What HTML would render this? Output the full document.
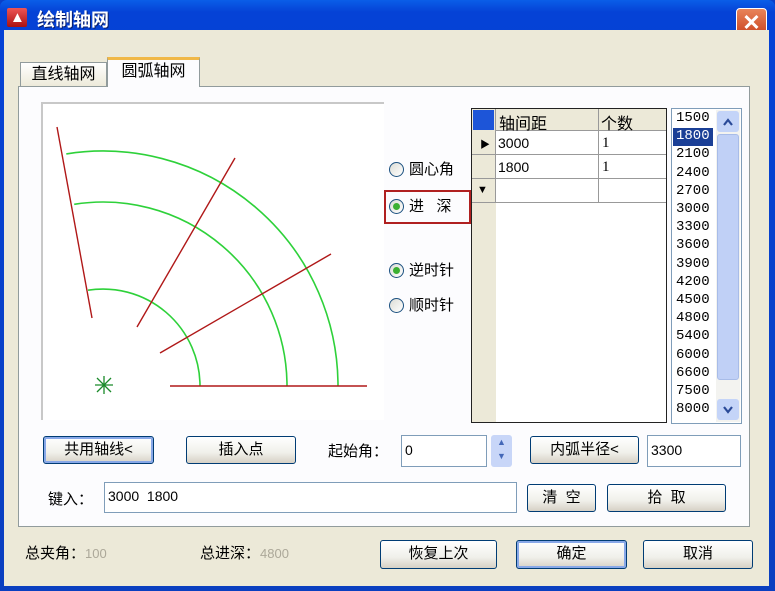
<!DOCTYPE html>
<html><head><meta charset="utf-8"><style>
*{box-sizing:border-box;margin:0;padding:0}
body{width:775px;height:591px;overflow:hidden;background:#0a3fc8;font-family:"Liberation Sans","Noto Sans CJK SC",sans-serif;font-size:14px;color:#000}
.a{position:absolute}
#win{position:absolute;left:0;top:0;width:775px;height:591px;background:linear-gradient(#0a5ee8,#0542d6 12px,#0a3fc0);border-radius:7px 7px 0 0}
#client{position:absolute;left:4px;top:30px;width:765px;height:556px;background:#ECE9D8}
.btn{position:absolute;border:1px solid #003c74;border-radius:3px;background:linear-gradient(#fff,#f0f0ea 60%,#d6d0c5);text-align:center;font-size:15px;line-height:25px}
.btn.f{box-shadow:inset 0 0 0 2px #88a8e8}
.inp{position:absolute;background:#fff;border:1px solid #7f9db9;font-size:14px;padding-left:3px}
.rad{position:absolute;width:15px;height:15px;border-radius:50%;border:1px solid #1c5180;background:linear-gradient(135deg,#dcdcd5,#fff)}
.rad.on::after{content:"";position:absolute;left:3px;top:3px;width:7px;height:7px;border-radius:50%;background:#3cb032}
.lbl{position:absolute;font-size:15px}
</style></head><body>
<div id="win">
<div class="a" style="left:7px;top:8px;width:20px;height:19px;background:linear-gradient(#e55,#a11);border-radius:2px"></div>
<div class="a" style="left:10px;top:9px;color:#fff;font-weight:bold;font-size:15px">▲</div>
<div class="a" style="left:37px;top:6px;color:#fff;font-weight:bold;font-size:18px;text-shadow:1px 1px #0a1e6a">绘制轴网</div>
<div class="a" style="left:736px;top:8px;width:31px;height:30px;border:1px solid #fff;border-radius:4px;background:linear-gradient(#e8845a,#c8401c);color:#fff;font-size:22px;text-align:center;line-height:27px;font-weight:bold">✕</div>
</div>
<div id="client"></div>
<div class="a" style="left:20px;top:62px;width:87px;height:25px;border:1px solid #919b9c;border-bottom:none;background:linear-gradient(#fff,#ece9d8);font-size:16px;text-align:center;line-height:24px">直线轴网</div>
<div class="a" style="left:18px;top:86px;width:732px;height:441px;border:1px solid #919b9c;background:#fcfcfe"></div>
<div class="a" style="left:107px;top:57px;width:93px;height:30px;border:1px solid #919b9c;border-top:3px solid #f0b848;border-bottom:none;background:#fcfcfe;font-size:16px;text-align:center;line-height:24px">圆弧轴网</div>
<div class="a" style="left:41px;top:102px;width:343px;height:318px;background:#fff;border-top:2px solid #c8c8c8;border-left:2px solid #c8c8c8"></div>
<svg class="a" style="left:0;top:0" width="775" height="591">
<g fill="none" stroke="#2ed13a" stroke-width="1.6">
<path d="M200 386 A97 97 0 0 0 88 290.2"/>
<path d="M287 386 A184 184 0 0 0 74.2 204.3"/>
<path d="M338 386 A235 235 0 0 0 66.3 153.9"/>
</g>
<g stroke="#b01818" stroke-width="1.4">
<line x1="57" y1="127" x2="92" y2="318"/>
<line x1="137" y1="327" x2="235" y2="158"/>
<line x1="160" y1="353" x2="331" y2="254"/>
<line x1="170" y1="386" x2="367" y2="386"/>
</g>
<g stroke="#1a8a2a" stroke-width="1.3">
<line x1="95" y1="385" x2="113" y2="385"/><line x1="104" y1="376" x2="104" y2="394"/>
<line x1="97" y1="378" x2="111" y2="392"/><line x1="111" y1="378" x2="97" y2="392"/>
</g>
</svg>
<div class="rad" style="left:389px;top:162px"></div><div class="lbl" style="left:409px;top:158px">圆心角</div>
<div class="a" style="left:384px;top:190px;width:87px;height:34px;border:2px solid #b02020"></div>
<div class="rad on" style="left:389px;top:199px"></div><div class="lbl" style="left:409px;top:195px">进&nbsp;&nbsp;&nbsp;深</div>
<div class="rad on" style="left:389px;top:263px"></div><div class="lbl" style="left:409px;top:259px">逆时针</div>
<div class="rad" style="left:389px;top:298px"></div><div class="lbl" style="left:409px;top:294px">顺时针</div>
<div class="a" style="left:471px;top:108px;width:196px;height:315px;border:1px solid #222;background:#fff"></div>
<div class="a" style="left:472px;top:109px;width:24px;height:313px;background:#ece9d8"></div>
<div class="a" style="left:473px;top:110px;width:21px;height:20px;background:#1d55d8"></div>
<div class="a" style="left:496px;top:109px;width:170px;height:22px;background:#ece9d8;border-bottom:1px solid #999"></div>
<div class="a" style="left:598px;top:109px;width:1px;height:94px;background:#999"></div>
<div class="a" style="left:472px;top:154px;width:194px;height:1px;background:#999"></div>
<div class="a" style="left:472px;top:178px;width:194px;height:1px;background:#999"></div>
<div class="a" style="left:472px;top:202px;width:194px;height:1px;background:#999"></div>
<div class="a" style="left:495px;top:109px;width:1px;height:94px;background:#999"></div>
<div class="a" style="left:499px;top:110px;font-size:16px">轴间距</div><div class="a" style="left:601px;top:110px;font-size:16px">个数</div>
<div class="a" style="left:480px;top:136px;font-size:10px">▶</div>
<div class="a" style="left:477px;top:184px;font-size:11px">▼</div>
<div class="a" style="left:498px;top:135px;font-size:14px">3000</div><div class="a" style="left:602px;top:135px;font-family:'Liberation Serif';font-size:15px">1</div>
<div class="a" style="left:498px;top:159px;font-size:14px">1800</div><div class="a" style="left:602px;top:159px;font-family:'Liberation Serif';font-size:15px">1</div>
<div class="a" style="left:671px;top:108px;width:71px;height:316px;border:1px solid #7f9db9;background:#fff"></div>
<div class="a" style="left:673px;top:128px;width:40px;height:18px;background:#1a3f96"></div>
<div class="a" style="left:676px;top:109px;font-family:'Liberation Mono',monospace;font-size:14px;line-height:18.2px;color:#000">1500<br><span style="color:#fff">1800</span><br>2100<br>2400<br>2700<br>3000<br>3300<br>3600<br>3900<br>4200<br>4500<br>4800<br>5400<br>6000<br>6600<br>7500<br>8000</div>
<div class="a" style="left:716px;top:110px;width:24px;height:312px;background:#f3f3f0"></div>
<div class="a" style="left:717px;top:111px;width:22px;height:21px;border-radius:3px;background:#c4d4f8"></div>
<div class="a" style="left:717px;top:134px;width:22px;height:246px;border-radius:3px;background:#c0d0f6;border:1px solid #a8bce8"></div>
<div class="a" style="left:717px;top:399px;width:22px;height:21px;border-radius:3px;background:#c4d4f8"></div>
<svg class="a" style="left:0;top:0" width="775" height="591"><g fill="none" stroke="#2a4a98" stroke-width="2.2"><path d="M724 125 L728 120 L732 125"/><path d="M724 407 L728 412 L732 407"/></g></svg>
<div class="btn f" style="left:43px;top:436px;width:111px;height:28px">共用轴线&lt;</div>
<div class="btn" style="left:186px;top:436px;width:110px;height:28px">插入点</div>
<div class="lbl" style="left:328px;top:440px">起始角：</div>
<div class="inp" style="left:401px;top:435px;width:86px;height:32px;line-height:28px">0</div>
<div class="a" style="left:491px;top:435px;width:21px;height:32px;border-radius:3px;background:#c8d6f8;color:#4468b8;font-size:9px;text-align:center;line-height:14px">▲<br>▼</div>
<div class="btn" style="left:530px;top:436px;width:109px;height:28px">内弧半径&lt;</div>
<div class="inp" style="left:647px;top:435px;width:94px;height:32px;line-height:28px">3300</div>
<div class="lbl" style="left:48px;top:488px">键入：</div>
<div class="inp" style="left:104px;top:482px;width:413px;height:31px;line-height:27px">3000&nbsp;&nbsp;1800</div>
<div class="btn" style="left:527px;top:484px;width:69px;height:28px">清&nbsp;&nbsp;空</div>
<div class="btn" style="left:607px;top:484px;width:119px;height:28px">拾&nbsp;&nbsp;取</div>
<div class="lbl" style="left:25px;top:542px">总夹角：<span style="color:#aca899;font-size:13px">100</span></div>
<div class="lbl" style="left:200px;top:542px">总进深：<span style="color:#aca899;font-size:13px">4800</span></div>
<div class="btn" style="left:380px;top:540px;width:117px;height:29px">恢复上次</div>
<div class="btn f" style="left:516px;top:540px;width:111px;height:29px">确定</div>
<div class="btn" style="left:643px;top:540px;width:110px;height:29px">取消</div>
</body></html>
